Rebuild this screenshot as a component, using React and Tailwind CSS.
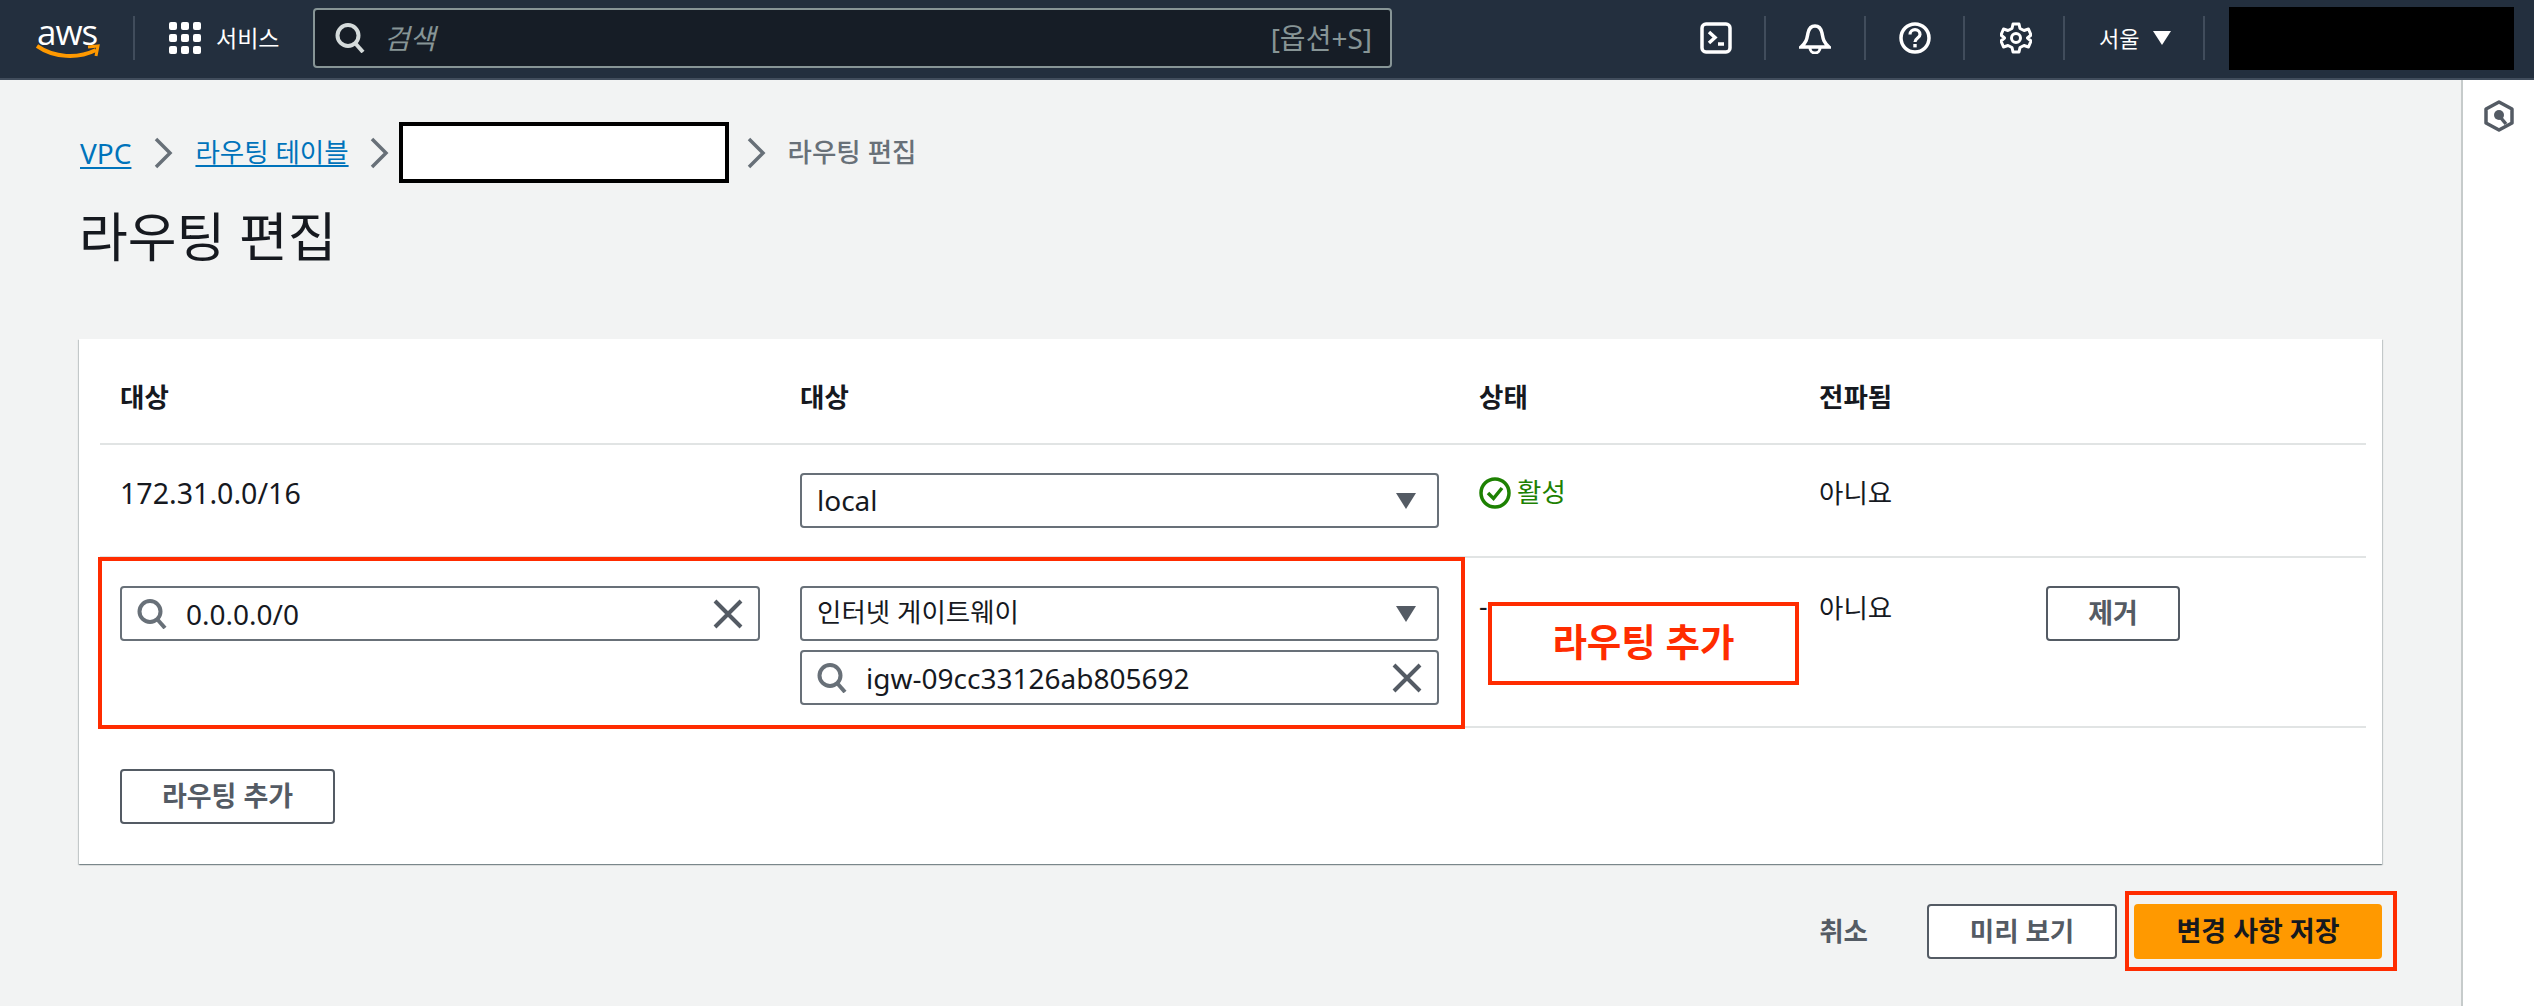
const Chevron = () => (
  <svg width="20" height="32" viewBox="0 0 20 32" fill="none" className="shrink-0">
    <path d="M3 2 L17 16 L3 30" stroke="#687078" strokeWidth="3.5" />
  </svg>
);

const SearchIcon = ({ color = "#687078" }) => (
  <svg width="30" height="30" viewBox="0 0 30 30" fill="none" className="shrink-0">
    <circle cx="13" cy="12.5" r="10.5" stroke={color} strokeWidth="4" />
    <path d="M20 20 L28 29" stroke={color} strokeWidth="4" />
  </svg>
);

const ClearIcon = () => (
  <svg width="30" height="30" viewBox="0 0 30 30" fill="none" className="shrink-0">
    <path d="M2 2 L28 28 M28 2 L2 28" stroke="#545b64" strokeWidth="4" />
  </svg>
);

const Caret = () => (
  <svg width="22" height="18" viewBox="0 0 22 18" className="shrink-0">
    <path d="M1 1 H21 L11 17 Z" fill="#545b64" />
  </svg>
);

const SelectBox = ({ children }) => (
  <div className="flex h-[55px] items-center justify-between rounded border-2 border-[#687078] bg-white pl-[15px] pr-[20px] text-[#16191f]">
    <span className="pb-[2px]">{children}</span>
    <Caret />
  </div>
);

const SearchBox = ({ value }) => (
  <div className="flex h-[55px] items-center rounded border-2 border-[#687078] bg-white pl-[15px] pr-[15px] text-[28px] text-[#16191f]">
    <SearchIcon />
    <span className="ml-[19px] flex-1">{value}</span>
    <ClearIcon />
  </div>
);

const NavDivider = () => <div className="h-[44px] w-[2px] bg-[#414d5c]" />;

const TopNav = () => (
  <header className="flex h-[80px] items-center border-b-2 border-[#414d5c] bg-[#232f3e] pb-[2px] text-white">
    <div className="relative ml-[36px] h-[44px] w-[64px]">
      <span className="absolute left-[1px] top-[-9px] font-['Open_Sans',sans-serif] text-[35px] leading-[50px] tracking-[-1px]">aws</span>
      <svg width="64" height="16" viewBox="0 0 64 16" fill="none" className="absolute left-0 top-[28px]">
        <path d="M1 2 C 18 14 42 15 60 6" stroke="#ff9900" strokeWidth="4" />
        <path d="M52 3 L62 2 L60 12" stroke="#ff9900" strokeWidth="3" />
      </svg>
    </div>
    <div className="ml-[33px]"><NavDivider /></div>
    <div className="ml-[34px] grid grid-cols-3 gap-[4px]">
      {[...Array(9)].map((_, i) => (
        <span key={i} className="h-[8px] w-[8px] rounded-[2px] bg-white" />
      ))}
    </div>
    <span className="ml-[15px] w-[63px] whitespace-nowrap text-[23px]">서비스</span>
    <div className="ml-[34px] flex h-[60px] w-[1079px] items-center rounded border-2 border-[#879596] bg-[#161d26] pl-[20px] pr-[18px]">
      <SearchIcon color="#d5dbdb" />
      <span className="ml-[19px] flex-1 text-[28px] italic text-[#879596]">검색</span>
      <span className="text-[28px] text-[#879596]">[옵션+S]</span>
    </div>
    <div className="ml-[308px] flex items-center">
      <svg width="32" height="32" viewBox="0 0 32 32" fill="none">
        <rect x="2" y="2" width="28" height="28" rx="4" stroke="white" strokeWidth="3.5" />
        <path d="M9 10 L15 15.5 L9 21 M18 22 H24" stroke="white" strokeWidth="3.5" />
      </svg>
      <div className="ml-[32px]"><NavDivider /></div>
      <svg width="32" height="32" viewBox="0 0 32 32" fill="none" className="ml-[33px]">
        <path d="M2 25 C 8 20 8 16 9 11 C 10 6 13 4 16 4 C 19 4 22 6 23 11 C 24 16 24 20 30 25 Z" stroke="white" strokeWidth="3.5" />
        <path d="M11 26 A 5 5 0 0 0 21 26" stroke="white" strokeWidth="3" />
      </svg>
      <div className="ml-[33px]"><NavDivider /></div>
      <svg width="32" height="32" viewBox="0 0 32 32" fill="none" className="ml-[33px]">
        <circle cx="16" cy="16" r="14" stroke="white" strokeWidth="3.5" />
        <path d="M11 12.5 C 11 6 21 6 21 12.5 C 21 16 16 16 16 20" stroke="white" strokeWidth="3.2" />
        <rect x="14.3" y="22" width="3.4" height="3.4" fill="white" />
      </svg>
      <div className="ml-[32px]"><NavDivider /></div>
      <svg width="32" height="32" viewBox="0 0 32 32" fill="none" className="ml-[35px]">
        <path d="M13 2 H19 L20 6.5 L24 8.5 L28.5 7 L31 13 L27.5 16 L31 19 L28.5 25 L24 23.5 L20 25.5 L19 30 H13 L12 25.5 L8 23.5 L3.5 25 L1 19 L4.5 16 L1 13 L3.5 7 L8 8.5 L12 6.5 Z" stroke="white" strokeWidth="3" strokeLinejoin="round" />
        <circle cx="16" cy="16" r="4.5" stroke="white" strokeWidth="3" />
      </svg>
      <div className="ml-[31px]"><NavDivider /></div>
      <span className="ml-[34px] text-[22px]">서울</span>
      <svg width="18" height="14" viewBox="0 0 18 14" className="ml-[14px]">
        <path d="M0 0 H18 L9 14 Z" fill="white" />
      </svg>
      <div className="ml-[32px]"><NavDivider /></div>
      <div className="ml-[24px] h-[63px] w-[285px] bg-black" />
    </div>
  </header>
);

const Breadcrumbs = () => (
  <nav className="flex h-[61px] items-center text-[26.5px]">
    <a className="ml-[1px] text-[28px] text-[#0073bb] underline underline-offset-[3px]">VPC</a>
    <div className="ml-[22px]"><Chevron /></div>
    <a className="ml-[22px] text-[#0073bb] underline underline-offset-[3px]">라우팅 테이블</a>
    <div className="ml-[20px]"><Chevron /></div>
    <div className="ml-[10px] h-[61px] w-[330px] border-[4px] border-black bg-white" />
    <div className="ml-[17px]"><Chevron /></div>
    <span className="ml-[22px] font-medium text-[#687078]">라우팅 편집</span>
  </nav>
);

const columns = "grid grid-cols-[680px_679px_340px_227px_1fr]";

const RouteTable = () => (
  <section className="relative mt-[70px] h-[525px] w-[2303px] bg-white shadow-[0_1px_1px_0_rgba(0,28,36,0.3),1px_1px_1px_0_rgba(0,28,36,0.15),-1px_1px_1px_0_rgba(0,28,36,0.15)]">
    <div className="ml-[21px] mr-[16px]">
      <div className={`${columns} h-[106px] items-center border-b-2 border-[#e1e4e4] pl-[20px] pt-[14px] text-[26.5px] font-bold text-[#16191f]`}>
        <span>대상</span>
        <span>대상</span>
        <span>상태</span>
        <span>전파됨</span>
      </div>
      <div className={`${columns} h-[113px] border-b-2 border-[#e1e4e4] pl-[20px] pt-[28px] text-[28px] text-[#16191f]`}>
        <span className="text-[28.6px] leading-[40px]">172.31.0.0/16</span>
        <div className="pr-[40px]"><SelectBox>local</SelectBox></div>
        <div className="flex h-[40px] items-center gap-[6px] text-[26.5px] text-[#1d8102]">
          <svg width="32" height="32" viewBox="0 0 32 32" fill="none">
            <circle cx="16" cy="16" r="14" stroke="#1d8102" strokeWidth="3.5" />
            <path d="M9 16 L14.5 21.5 L23 11" stroke="#1d8102" strokeWidth="3.5" />
          </svg>
          <span>활성</span>
        </div>
        <span className="text-[26.5px] leading-[40px]">아니요</span>
      </div>
      <div className={`${columns} h-[170px] border-b-2 border-[#e1e4e4] pl-[20px] pt-[28px] text-[26.5px] text-[#16191f]`}>
        <div className="pr-[40px]"><SearchBox value="0.0.0.0/0" /></div>
        <div className="flex flex-col gap-[9px] pr-[40px]">
          <SelectBox>인터넷 게이트웨이</SelectBox>
          <SearchBox value="igw-09cc33126ab805692" />
        </div>
        <span className="leading-[40px]">-</span>
        <span className="pt-[6px] leading-[32px]">아니요</span>
        <button className="h-[55px] w-[134px] rounded border-2 border-[#545b64] bg-white text-[27px] font-bold text-[#545b64]">제거</button>
      </div>
    </div>
    <button className="ml-[41px] mt-[41px] h-[55px] w-[215px] rounded border-2 border-[#545b64] bg-white text-[27px] font-bold text-[#545b64]">라우팅 추가</button>
    {/* red annotations */}
    <div className="absolute left-[19px] top-[218px] h-[172px] w-[1367px] border-[4px] border-[#ff2c00]" />
    <div className="absolute left-[1409px] top-[263px] flex h-[83px] w-[311px] items-center justify-center border-[4px] border-[#ff2c00] bg-white pb-[2px] text-[37.5px] font-bold text-[#ff2c00]">
      라우팅 추가
    </div>
  </section>
);

const Footer = () => (
  <div className="relative mt-[40px] flex w-[2303px] items-center justify-end text-[26.5px] font-bold text-[#545b64]">
    <span>취소</span>
    <button className="ml-[59px] h-[55px] w-[190px] rounded border-2 border-[#545b64] bg-white">미리 보기</button>
    <button className="ml-[17px] h-[55px] w-[248px] rounded bg-[#ff9900] text-[27px] text-[#16191f]">변경 사항 저장</button>
    <div className="absolute right-[-15px] top-[-13px] h-[80px] w-[272px] border-[4px] border-[#ff2c00]" />
  </div>
);

export default function App() {
  return (
    <div className="h-[1006px] w-[2534px] overflow-hidden bg-[#f2f3f3] font-['Noto_Sans','Noto_Sans_CJK_KR',sans-serif]">
      <TopNav />
      <div className="flex h-[926px]">
        <main className="flex-1 pl-[79px] pt-[42px]">
          <Breadcrumbs />
          <h1 className="mt-[22px] h-[64px] text-[53px] font-normal leading-[64px] text-[#16191f]">라우팅 편집</h1>
          <RouteTable />
          <Footer />
        </main>
        <aside className="flex w-[73px] justify-center border-l-2 border-[#c6cbcb] bg-white pt-[20px]">
          <svg width="30" height="32" viewBox="0 0 30 32" fill="none">
            <path d="M15 2 L28 9 V23 L15 30 L2 23 V9 Z" stroke="#545b64" strokeWidth="3.5" strokeLinejoin="round" />
            <circle cx="15" cy="15" r="5" fill="#545b64" />
            <path d="M17 18 L22 24" stroke="#545b64" strokeWidth="3.5" />
          </svg>
        </aside>
      </div>
    </div>
  );
}
